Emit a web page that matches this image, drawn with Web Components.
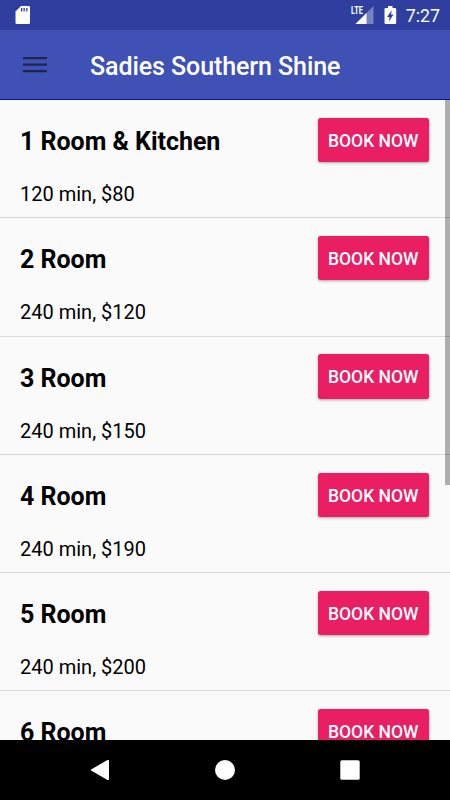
<!DOCTYPE html>
<html lang="en">
<head>
<meta charset="utf-8">
<title>Sadies Southern Shine</title>
<style>
    html, body {
        margin: 0;
        height: 100%;
        overflow: hidden;
    }

    body {
        font-family: Roboto, "Liberation Sans", sans-serif;
        background: #fafafa;
    }
</style>
</head>
<body>
<phone-screen>
    <status-bar slot="status" time="7:27"></status-bar>
    <app-toolbar slot="toolbar">Sadies Southern Shine</app-toolbar>
    <service-item><span slot="name">1 Room &amp; Kitchen</span><span slot="detail">120 min, $80</span></service-item>
    <service-item><span slot="name">2 Room</span><span slot="detail">240 min, $120</span></service-item>
    <service-item><span slot="name">3 Room</span><span slot="detail">240 min, $150</span></service-item>
    <service-item><span slot="name">4 Room</span><span slot="detail">240 min, $190</span></service-item>
    <service-item><span slot="name">5 Room</span><span slot="detail">240 min, $200</span></service-item>
    <service-item><span slot="name">6 Room</span></service-item>
    <nav-bar slot="nav"></nav-bar>
</phone-screen>

<script>
function makeTemplate(html) {
    const template = document.createElement("template");
    template.innerHTML = html;
    return template;
}

const screenTemplate = makeTemplate(`
    <style>
    :host {
        display: flex;
        flex-direction: column;
        width: 450px;
        height: 800px;
        overflow: hidden;
    }

    .list {
        flex: 1;
        min-height: 0;
        position: relative;
        overflow: hidden;
        background: #fafafa;
    }

    /* scroll position indicator, drawn over the list */
    .scrollbar {
        position: absolute;
        top: 0;
        right: 0;
        width: 5px;
        height: 385px;
        background: rgba(0, 0, 0, 0.3);
    }
    </style>
    <slot name="status"></slot>
    <slot name="toolbar"></slot>
    <div class="list">
        <slot></slot>
        <div class="scrollbar"></div>
    </div>
    <slot name="nav"></slot>
`);

class PhoneScreen extends HTMLElement {
    constructor() {
        super();
        this.root = this.attachShadow({ mode: "open" });
        this.root.appendChild(screenTemplate.content.cloneNode(true));
    }
}

const statusTemplate = makeTemplate(`
    <style>
    :host {
        display: flex;
        align-items: center;
        flex: none;
        height: 30px;
        box-sizing: border-box;
        padding: 0 10px 0 14px;
        background: #303f9f;
        color: #fff;
    }

    svg {
        display: block;
        flex: none;
    }

    .signal {
        margin-left: auto;
    }

    .signal text {
        font-family: Roboto, "Liberation Sans", sans-serif;
        font-size: 10.5px;
        font-weight: 700;
        fill: #fff;
    }

    .battery {
        margin-left: 10px;
    }

    .time {
        margin-left: 8.5px;
        font-size: 17.8px;
        line-height: 30px;
        padding-top: 1px;
    }
    </style>
    <svg width="17" height="30" viewBox="0 0 17 30">
        <path fill="#fff" d="M7 6h7.700q1.300 0 1.300 1.300v15.400q0 1.300-1.300 1.300H2.800q-1.300 0-1.300-1.300V11.500z"/>
        <path fill="#303f9f" d="M7 8h1.300v3.500H7zM9.500 8h1.300v3.500H9.500zM12.200 8h1.300v3.500h-1.300z"/>
    </svg>
    <svg class="signal" width="23" height="30" viewBox="0 0 23 30">
        <path fill="#fff" fill-opacity=".35" d="M22.500 6v18H4.500z"/>
        <path fill="#fff" d="M15.500 13v11H4.500z"/>
        <path fill="#303f9f" d="M0 5h12.500v9.500H0z"/>
        <text x="0" y="13.700" textLength="12" lengthAdjust="spacingAndGlyphs">LTE</text>
    </svg>
    <svg class="battery" width="13" height="30" viewBox="0 0 13 30">
        <path fill="#fff" d="M4 6h4.500v2H11q1.200 0 1.200 1.200v13.600q0 1.200-1.200 1.200H1.700Q.5 24 .5 22.800V9.200Q.5 8 1.700 8H4z"/>
        <path fill="#303f9f" d="M7.800 10.200L7 14.600h2.600L4.800 21.600l.8-4.700H3z"/>
    </svg>
    <span class="time"></span>
`);

class StatusBar extends HTMLElement {
    constructor() {
        super();
        this.root = this.attachShadow({ mode: "open" });
        this.root.appendChild(statusTemplate.content.cloneNode(true));
    }

    connectedCallback() {
        this.root.querySelector(".time").textContent = this.getAttribute("time");
    }
}

const toolbarTemplate = makeTemplate(`
    <style>
    :host {
        display: flex;
        align-items: center;
        flex: none;
        height: 70px;
        box-sizing: border-box;
        padding-left: 23px;
        background: #3f51b5;
        border-bottom: 1px solid #0a10a0;
        color: #fff;
    }

    svg {
        display: block;
        margin-right: 43px;
    }

    .title {
        font-size: 25px;
        font-weight: 500;
        letter-spacing: -0.08px;
        line-height: 30px;
        white-space: nowrap;
        padding-top: 5px;
    }
    </style>
    <svg width="24" height="18" viewBox="0 0 24 18">
        <path fill="#20254f" d="M0 1h24v2.200H0zM0 7.500h24v2.200H0zM0 14h24v2.200H0z"/>
    </svg>
    <div class="title"><slot></slot></div>
`);

class AppToolbar extends HTMLElement {
    constructor() {
        super();
        this.root = this.attachShadow({ mode: "open" });
        this.root.appendChild(toolbarTemplate.content.cloneNode(true));
    }
}

const itemTemplate = makeTemplate(`
    <style>
    :host {
        display: block;
        height: 118.3px;
        box-sizing: border-box;
        padding: 17.700px 21.500px 0 20px;
        border-bottom: 1px solid #d9d9d9;
        color: #000;
    }

    .top {
        display: flex;
        justify-content: space-between;
        align-items: center;
        height: 44.500px;
    }

    .name {
        font-size: 25px;
        font-weight: 700;
        letter-spacing: -0.03px;
        line-height: 30px;
        padding-top: 4px;
    }

    .detail {
        font-size: 20px;
        line-height: 24px;
        margin-top: 20px;
    }
    </style>
    <div class="top">
        <div class="name"><slot name="name"></slot></div>
        <book-button></book-button>
    </div>
    <div class="detail"><slot name="detail"></slot></div>
`);

class ServiceItem extends HTMLElement {
    constructor() {
        super();
        this.root = this.attachShadow({ mode: "open" });
        this.root.appendChild(itemTemplate.content.cloneNode(true));
    }
}

const buttonTemplate = makeTemplate(`
    <style>
    :host {
        display: block;
        flex: none;
    }

    button {
        display: block;
        box-sizing: border-box;
        width: 110.500px;
        height: 44.500px;
        padding: 1px 0 0;
        border: 0;
        border-radius: 2.500px;
        background: #e91e63;
        box-shadow: 0 1px 3px rgba(0, 0, 0, 0.35);
        color: #fff;
        font-family: inherit;
        font-size: 17.5px;
        font-weight: 500;
        line-height: 44px;
        white-space: nowrap;
    }
    </style>
    <button type="button">BOOK NOW</button>
`);

class BookButton extends HTMLElement {
    constructor() {
        super();
        this.root = this.attachShadow({ mode: "open" });
        this.root.appendChild(buttonTemplate.content.cloneNode(true));
    }
}

const navTemplate = makeTemplate(`
    <style>
    :host {
        display: flex;
        justify-content: center;
        align-items: center;
        gap: 105px;
        flex: none;
        height: 60px;
        background: #000;
    }

    svg {
        display: block;
        fill: #fff;
    }
    </style>
    <svg width="20" height="20" viewBox="0 0 20 20"><path d="M17.500 0q1.500-.5 1.500 1v18q0 1.500-1.500 1L1.500 10.800q-1.200-.8 0-1.600z"/></svg>
    <svg width="20" height="20" viewBox="0 0 20 20"><circle cx="10" cy="10" r="10"/></svg>
    <svg width="20" height="20" viewBox="0 0 20 20"><rect x=".3" y=".3" width="19.400" height="19.400" rx="1.500"/></svg>
`);

class NavBar extends HTMLElement {
    constructor() {
        super();
        this.root = this.attachShadow({ mode: "open" });
        this.root.appendChild(navTemplate.content.cloneNode(true));
    }
}

customElements.define("book-button", BookButton);
customElements.define("service-item", ServiceItem);
customElements.define("app-toolbar", AppToolbar);
customElements.define("status-bar", StatusBar);
customElements.define("nav-bar", NavBar);
customElements.define("phone-screen", PhoneScreen);
</script>
</body>
</html>
